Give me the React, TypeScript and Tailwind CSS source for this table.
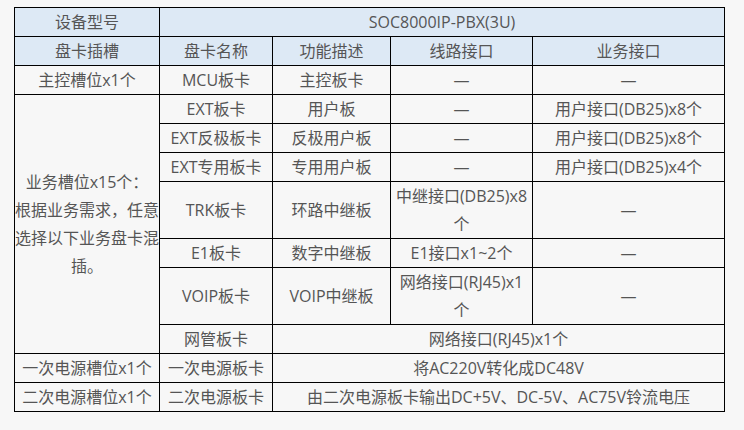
const cell = "border border-black p-0 text-center align-middle leading-[28px]";
const head = `${cell} bg-[#dde9f5]`;

export default function App() {
  return (
    <div
      className="min-h-screen bg-[#f7f7f7] pl-[14px] pt-[7px] text-[16px] text-[#555555]"
      style={{ fontFamily: '"Open Sans", "Noto Sans CJK SC", sans-serif' }}
    >
      <table className="w-[711px] table-fixed border-collapse">
        <colgroup>
          <col className="w-[145px]" />
          <col className="w-[113px]" />
          <col className="w-[118px]" />
          <col className="w-[142px]" />
          <col className="w-[192px]" />
        </colgroup>
        <tbody>
          <tr>
            <td className={head}>设备型号</td>
            <td className={head} colSpan={4}>SOC8000IP-PBX(3U)</td>
          </tr>
          <tr>
            <td className={head}>盘卡插槽</td>
            <td className={head}>盘卡名称</td>
            <td className={head}>功能描述</td>
            <td className={head}>线路接口</td>
            <td className={head}>业务接口</td>
          </tr>
          <tr>
            <td className={cell}>主控槽位x1个</td>
            <td className={cell}>MCU板卡</td>
            <td className={cell}>主控板卡</td>
            <td className={cell}>—</td>
            <td className={cell}>—</td>
          </tr>
          <tr>
            <td className={cell} rowSpan={7}>
              业务槽位x15个：
              <br />
              根据业务需求，任意
              <br />
              选择以下业务盘卡混
              <br />
              插。
            </td>
            <td className={cell}>EXT板卡</td>
            <td className={cell}>用户板</td>
            <td className={cell}>—</td>
            <td className={cell}>用户接口(DB25)x8个</td>
          </tr>
          <tr>
            <td className={cell}>EXT反极板卡</td>
            <td className={cell}>反极用户板</td>
            <td className={cell}>—</td>
            <td className={cell}>用户接口(DB25)x8个</td>
          </tr>
          <tr>
            <td className={cell}>EXT专用板卡</td>
            <td className={cell}>专用用户板</td>
            <td className={cell}>—</td>
            <td className={cell}>用户接口(DB25)x4个</td>
          </tr>
          <tr>
            <td className={cell}>TRK板卡</td>
            <td className={cell}>环路中继板</td>
            <td className={cell}>
              中继接口(DB25)x8
              <br />个
            </td>
            <td className={cell}>—</td>
          </tr>
          <tr>
            <td className={cell}>E1板卡</td>
            <td className={cell}>数字中继板</td>
            <td className={cell}>E1接口x1~2个</td>
            <td className={cell}>—</td>
          </tr>
          <tr>
            <td className={cell}>VOIP板卡</td>
            <td className={cell}>VOIP中继板</td>
            <td className={cell}>
              网络接口(RJ45)x1
              <br />个
            </td>
            <td className={cell}>—</td>
          </tr>
          <tr>
            <td className={cell}>网管板卡</td>
            <td className={cell} colSpan={3}>网络接口(RJ45)x1个</td>
          </tr>
          <tr>
            <td className={cell}>一次电源槽位x1个</td>
            <td className={cell}>一次电源板卡</td>
            <td className={cell} colSpan={3}>将AC220V转化成DC48V</td>
          </tr>
          <tr>
            <td className={cell}>二次电源槽位x1个</td>
            <td className={cell}>二次电源板卡</td>
            <td className={cell} colSpan={3}>由二次电源板卡输出DC+5V、DC-5V、AC75V铃流电压</td>
          </tr>
        </tbody>
      </table>
    </div>
  );
}
